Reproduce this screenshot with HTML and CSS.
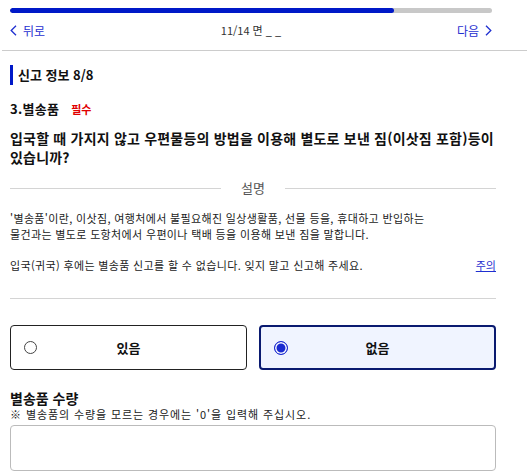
FILE: index.html
```html
<!DOCTYPE html>
<html lang="ko">
<head>
<meta charset="utf-8">
<link rel="stylesheet" href="styles.css">
</head>
<body>
<header class="top">
  <div class="progress"><div class="progress-fill"></div></div>
  <nav class="nav">
    <a class="nav-link"><svg class="chev" width="7" height="11" viewBox="0 0 7 11"><path d="M6 0.8 L1.2 5.5 L6 10.2" fill="none" stroke="currentColor" stroke-width="1.3"/></svg>뒤로</a>
    <span class="page-no">11/14 면 <span class="blank">_ _</span></span>
    <a class="nav-link">다음<svg class="chev" width="7" height="11" viewBox="0 0 7 11"><path d="M1 0.8 L5.8 5.5 L1 10.2" fill="none" stroke="currentColor" stroke-width="1.3"/></svg></a>
  </nav>
</header>
<hr class="top-rule">
<main class="page">
  <h2 class="section-title">신고 정보 8/8</h2>
  <h3 class="item-title">3.별송품 <span class="req">필수</span></h3>
  <p class="question">입국할 때 가지지 않고 우편물등의 방법을 이용해 별도로 보낸 짐(이삿짐 포함)등이 있습니까?</p>
  <div class="legend"><span class="legend-line"></span><span class="legend-text">설명</span><span class="legend-line"></span></div>
  <p class="desc">'별송품'이란, 이삿짐, 여행처에서 불필요해진 일상생활품, 선물 등을, 휴대하고 반입하는<br>물건과는 별도로 도항처에서 우편이나 택배 등을 이용해 보낸 짐을 말합니다.</p>
  <div class="desc-row"><span>입국(귀국) 후에는 별송품 신고를 할 수 없습니다. 잊지 말고 신고해 주세요.</span><a class="caution">주의</a></div>
  <hr class="rule">
  <div class="choices">
    <label class="choice"><span class="radio"></span><span class="choice-label">있음</span></label>
    <label class="choice selected"><span class="radio on"></span><span class="choice-label">없음</span></label>
  </div>
  <h3 class="field-title">별송품 수량</h3>
  <p class="note">※ 별송품의 수량을 모르는 경우에는 '0'을 입력해 주십시오.</p>
  <div class="input"></div>
</main>
</body>
</html>
```
FILE: styles.css
```css
* { box-sizing: border-box; }
html, body { margin: 0; padding: 0; background: #fff; }
body {
  font-family: "Noto Sans CJK KR", "Noto Sans", "Liberation Sans", sans-serif;
  color: #111;
  width: 527px;
  height: 472px;
  overflow: hidden;
}
.top { padding: 8px 35px 0 10px; }
.progress {
  height: 5px;
  background: #c8c8c8;
  border-radius: 3px;
  overflow: hidden;
}
.progress-fill {
  width: 384px;
  height: 100%;
  background: #0019c8;
  border-radius: 3px;
}
.nav {
  display: flex;
  justify-content: space-between;
  align-items: center;
  height: 34px;
  font-size: 12px;
}
.nav-link { color: #1f2fd0; display: flex; align-items: center; gap: 6px; }
.chev { display: block; }
.page-no { color: #333; font-size: 11px; margin-left: 0; }
.blank { color: #111; }
.top-rule { margin: 3px 0 0 2px; border: 0; border-top: 1px solid #ccc; }
.page { padding: 0 31px 0 10px; }
.section-title {
  margin: 14px 0 0;
  border-left: 3px solid #0019c8;
  padding-left: 5px;
  font-size: 13px;
  line-height: 20px;
  font-weight: 700;
}
.item-title {
  margin: 14px 0 0;
  font-size: 13px;
  font-weight: 700;
  line-height: 20px;
  letter-spacing: 0.3px;
}
.req { color: #e00000; font-size: 11px; margin-left: 8px; letter-spacing: 0; }
.question {
  margin: 10px 0 0;
  font-size: 14px;
  font-weight: 700;
  line-height: 19px;
  letter-spacing: 0.2px;
  word-break: keep-all;
}
.legend {
  display: flex;
  align-items: center;
  gap: 20px;
  margin-top: 12px;
}
.legend-line { flex: 1; border-top: 1px solid #d4d4d4; }
.legend-text { color: #555; font-size: 13px; line-height: 18px; }
.desc {
  margin: 13px 0 0;
  font-size: 11px;
  line-height: 16px;
  color: #222;
  letter-spacing: 0.35px;
}
.desc-row {
  display: flex;
  justify-content: space-between;
  margin-top: 15px;
  font-size: 11px;
  line-height: 16px;
  color: #222;
  letter-spacing: 0.35px;
}
.caution { color: #1f2fd0; text-decoration: underline; letter-spacing: 0; }
.rule { margin: 25px 0 0; border: 0; border-top: 1px solid #d4d4d4; }
.choices {
  display: grid;
  grid-template-columns: 1fr 1fr;
  gap: 12px;
  margin-top: 26px;
}
.choice {
  position: relative;
  display: flex;
  align-items: center;
  justify-content: center;
  height: 45px;
  border: 1px solid #222;
  border-radius: 4px;
  font-size: 13px;
  font-weight: 700;
}
.choice.selected {
  border: 2px solid #0a1a70;
  background: #f0f4ff;
}
.radio {
  position: absolute;
  left: 13px;
  top: 50%;
  width: 13px;
  height: 13px;
  margin-top: -6.5px;
  border: 1px solid #444;
  border-radius: 50%;
  background: #fff;
}
.radio.on {
  left: 13px;
  width: 14px;
  height: 14px;
  margin-top: -7px;
  border: 1.5px solid #1a2ad0;
  background: #1a2ad0;
  box-shadow: inset 0 0 0 1.5px #fff;
}
.field-title {
  margin: 19px 0 0;
  font-size: 14px;
  font-weight: 700;
  line-height: 18px;
}
.note { margin: 0; font-size: 11px; line-height: 15px; color: #222; letter-spacing: 0.9px; }
.input {
  margin-top: 3px;
  height: 46px;
  border: 1px solid #bbb;
  border-radius: 4px;
}
```
